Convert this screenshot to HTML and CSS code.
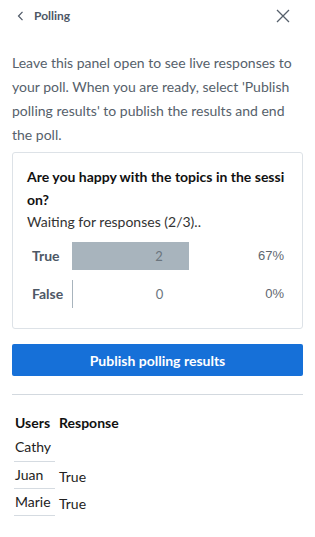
FILE: index.html
```html
<!DOCTYPE html>
<html>
<head>
<meta charset="utf-8">
<link rel="stylesheet" href="styles.css">
</head>
<body>
<div class="panel">
  <div class="header">
    <div class="back">
      <svg class="chev" width="7" height="10" viewBox="0 0 7 10"><path d="M5.5 0.8 L1.5 5 L5.5 9.2" fill="none" stroke="#4e5866" stroke-width="1.2"/></svg>
      <span class="title">Polling</span>
    </div>
    <svg class="close" width="14" height="14" viewBox="0 0 14 14"><path d="M1 1 L13 13 M13 1 L1 13" fill="none" stroke="#56606b" stroke-width="1.3"/></svg>
  </div>
  <p class="intro">Leave this panel open to see live responses to your poll. When you are ready, select 'Publish polling results' to publish the results and end the poll.</p>
  <div class="card">
    <div class="question">Are you happy with the topics in the session?</div>
    <div class="waiting">Waiting for responses (2/3)..</div>
    <div class="results">
      <div class="label">True</div>
      <div class="barcell"><div class="bar" style="width:67%"></div><span class="count">2</span></div>
      <div class="pct">67%</div>
      <div class="label">False</div>
      <div class="barcell empty"><span class="count">0</span></div>
      <div class="pct">0%</div>
    </div>
  </div>
  <button class="publish">Publish polling results</button>
  <div class="sep"></div>
  <div class="table">
    <div class="th">Users</div><div class="th">Response</div>
    <div class="user first">Cathy</div><div class="resp first"></div>
    <div class="user">Juan</div><div class="resp">True</div>
    <div class="user">Marie</div><div class="resp">True</div>
  </div>
</div>
</body>
</html>
```
FILE: styles.css
```css
* { box-sizing: border-box; }
html, body { margin: 0; padding: 0; background: #fff; }
body { font-family: "Lato", "Liberation Sans", sans-serif; font-size: 14px; color: #222; }
.panel { padding: 0 12px; width: 315px; }
.header { height: 31px; display: flex; align-items: center; justify-content: space-between; }
.back { display: flex; align-items: center; padding-left: 5px; }
.chev { display: block; margin-right: 10px; }
.title { font-size: 12px; font-weight: bold; color: #4e5866; }
.close { display: block; margin-right: 13px; }
.intro { margin: 20px 0 5px; line-height: 24px; color: #56616b; font-size: 14px; }
.card { border: 1px solid #dde2e7; border-radius: 3px; padding: 12px 18px 20px 14px; }
.question { font-weight: bold; color: #111; line-height: 23px; word-break: break-all; margin-right: -6px; }
.waiting { line-height: 21px; color: #333; }
.results { display: grid; grid-template-columns: 45px 174px 1fr; row-gap: 10px; margin-top: 10px; }
.label { padding-left: 5px; font-weight: bold; color: #4e5866; line-height: 28px; height: 28px; }
.barcell { position: relative; height: 28px; display: flex; align-items: center; justify-content: center; }
.bar { position: absolute; left: 0; top: 0; bottom: 0; background: #a8b4bd; }
.barcell.empty { border-left: 1px solid #a8b4bd; }
.count { position: relative; color: #6b757e; font-size: 13px; }
.pct { text-align: right; line-height: 28px; font-family: "Liberation Sans", sans-serif; font-size: 13px; color: #5f6870; }
.publish { display: block; width: 100%; margin-top: 15px; height: 32px; border: 0; border-radius: 2px; background: #1670d8; color: #fff; font-family: "Lato", "Liberation Sans", sans-serif; font-size: 14px; font-weight: bold; }
.sep { height: 1px; background: #d3d9df; margin-top: 18px; }
.table { display: grid; grid-template-columns: 41px auto; justify-content: start; column-gap: 3px; margin-top: 18px; margin-left: 2px; }
.th { font-weight: bold; color: #111; line-height: 20px; padding-left: 1px; }
.user { border-bottom: 1px solid #d5dbe1; padding: 4px 0 4px 1px; line-height: 18px; color: #222; }
.user.first { padding: 5px 0 5px 1px; }
.resp { padding: 6px 0 2px 1px; line-height: 18px; color: #222; }
.resp.first { padding: 0; }
```
